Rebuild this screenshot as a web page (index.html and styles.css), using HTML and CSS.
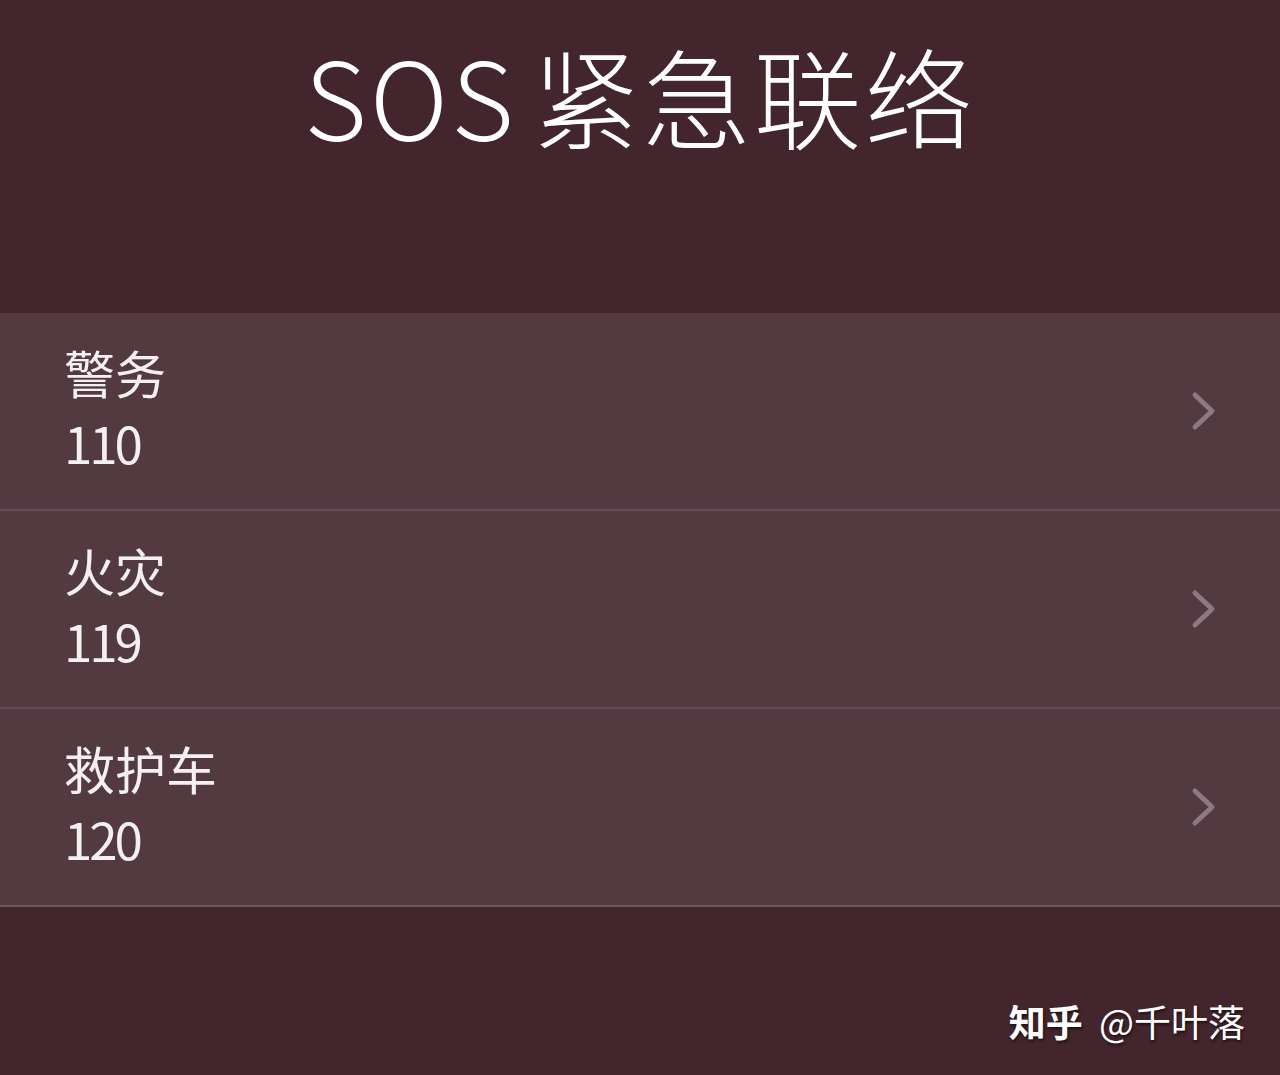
FILE: index.html
```html
<!DOCTYPE html>
<html lang="zh-CN">
<head>
    <meta charset="UTF-8">
    <meta name="viewport" content="width=device-width, initial-scale=1.0">
    <title>SOS 紧急联络</title>
    <link rel="stylesheet" href="styles.css">
</head>
<body>
    <div class="page">
        <header class="header">
            <h1>SOS 紧急联络</h1>
        </header>
        <ul class="contacts">
            <li class="contact">
                <div class="contact-info">
                    <span class="contact-name">警务</span>
                    <span class="contact-number">110</span>
                </div>
                <svg class="chevron" width="26" height="40" viewBox="0 0 26 40"><path d="M4 4 L21 20 L4 36" /></svg>
            </li>
            <li class="contact">
                <div class="contact-info">
                    <span class="contact-name">火灾</span>
                    <span class="contact-number">119</span>
                </div>
                <svg class="chevron" width="26" height="40" viewBox="0 0 26 40"><path d="M4 4 L21 20 L4 36" /></svg>
            </li>
            <li class="contact">
                <div class="contact-info">
                    <span class="contact-name">救护车</span>
                    <span class="contact-number">120</span>
                </div>
                <svg class="chevron" width="26" height="40" viewBox="0 0 26 40"><path d="M4 4 L21 20 L4 36" /></svg>
            </li>
        </ul>
        <p class="watermark"><b>知乎</b> @千叶落</p>
    </div>
</body>
</html>
```

FILE: styles.css
```css
html, body {
    margin: 0;
    padding: 0;
    background: #43252d;
}
.page {
    height: 1075px;
    display: flex;
    flex-direction: column;
    font-family: "Noto Sans CJK SC", "Noto Sans", sans-serif;
    color: #ffffff;
}
.header {
    height: 313px;
    box-sizing: border-box;
    padding-top: 34px;
}
.header h1 {
    margin: 0;
    text-align: center;
    font-size: 108px;
    font-weight: 300;
    line-height: 120px;
    letter-spacing: 3px;
    word-spacing: -12px;
}
.contacts {
    list-style: none;
    margin: 0;
    padding: 0;
    background: #533a40;
}
.contact {
    height: 196px;
    display: flex;
    align-items: center;
    justify-content: space-between;
    padding: 0 63px 0 64px;
    border-bottom: 2px solid #5f4e57;
}
.contact:last-child {
    border-bottom-color: #6a5a60;
}
.contact-info {
    display: flex;
    flex-direction: column;
    padding-bottom: 10px;
}
.contact-name {
    font-size: 51px;
    line-height: 72px;
    color: #f4eff0;
}
.contact-number {
    font-size: 51px;
    line-height: 68px;
    letter-spacing: -3px;
    color: #f4eff0;
}
.chevron path {
    fill: none;
    stroke: #8b7a82;
    stroke-width: 5;
    stroke-linecap: round;
    stroke-linejoin: round;
}
.watermark {
    margin: auto 35px 29px auto;
    font-size: 37px;
    line-height: 50px;
    text-shadow: 1px 2px 3px rgba(0, 0, 0, 0.6);
}
.watermark b {
    font-weight: 700;
    margin-right: 8px;
}
```
